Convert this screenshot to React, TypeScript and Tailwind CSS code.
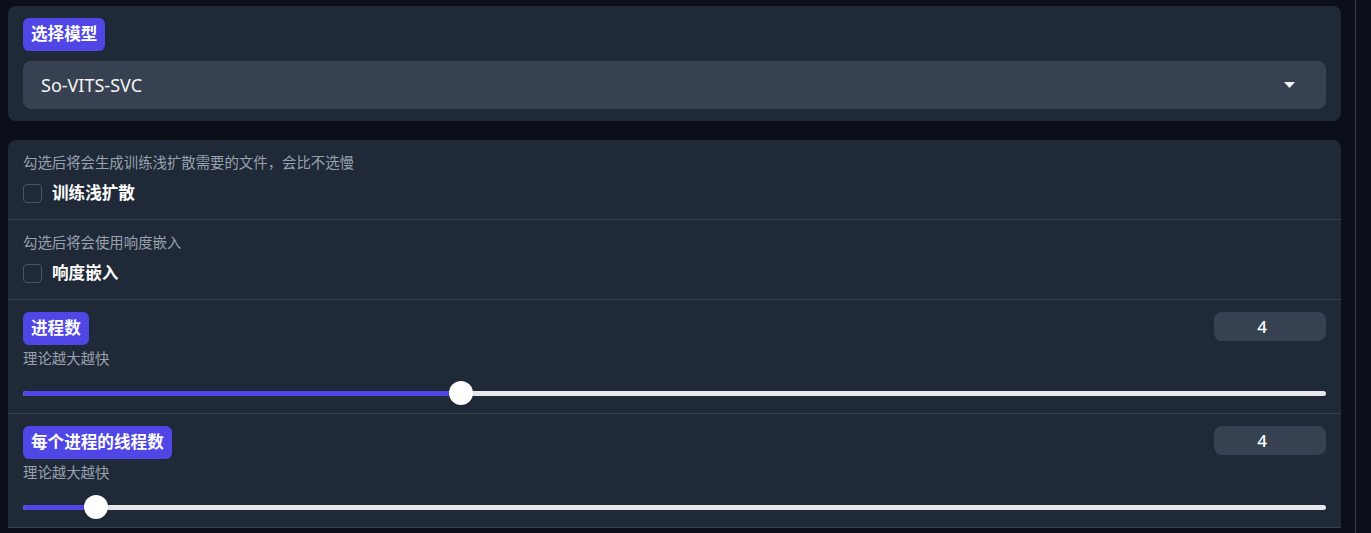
import React from 'react';

const font = { fontFamily: '"Noto Sans", "Noto Sans CJK SC", sans-serif' };

function Badge({ children }: { children: React.ReactNode }) {
  return (
    <span className="inline-flex h-[33px] items-center rounded-md bg-[#4f46e5] px-2 text-[16.6px] font-bold leading-none text-white">
      {children}
    </span>
  );
}

function CheckRow({ info, label }: { info: string; label: string }) {
  return (
    <div className="border-b border-[#374151] px-[15px] pt-[13px] pb-[15px]">
      <p className="text-[14.4px] leading-5 text-gray-400">{info}</p>
      <label className="mt-[9px] flex h-[22px] items-center gap-[10px]">
        <span className="h-[19px] w-[19px] rounded border border-[#4b5563] bg-[#1f2937]" />
        <span className="text-[16.6px] font-bold text-white">{label}</span>
      </label>
    </div>
  );
}

function SliderRow({ label, value, min, max }: { label: string; value: number; min: number; max: number }) {
  const pct = (value - min) / (max - min);
  const thumbCenter = `calc(12px + ${pct} * (100% - 24px))`;
  return (
    <div className="border-b border-[#374151] px-[15px] pt-3 pb-2">
      <div className="flex items-start justify-between">
        <div className="flex flex-col">
          <div>
            <Badge>{label}</Badge>
          </div>
          <p className="mt-1 text-[14.4px] leading-5 text-gray-400">理论越大越快</p>
        </div>
        <div className="flex h-[29px] w-[112px] items-center justify-center rounded-lg bg-[#374151] pr-4 text-[17px] font-medium text-white">
          {value}
        </div>
      </div>
      <div className="relative mt-3 h-6">
        <div className="absolute top-[10px] left-0 right-0 h-[5px] rounded-full bg-[#e5e7eb]" />
        <div className="absolute top-[10px] left-0 h-[5px] rounded-l-full bg-[#4f46e5]" style={{ width: thumbCenter }} />
        <div
          className="absolute top-0 h-6 w-6 -translate-x-1/2 rounded-full bg-white shadow"
          style={{ left: thumbCenter }}
        />
      </div>
    </div>
  );
}

export default function App() {
  return (
    <div className="flex min-h-[533px] bg-[#0b0f19]" style={font}>
      <div className="flex w-[1355px] flex-col gap-[19px] pt-1.5 pr-[14px] pl-2">
        <div className="rounded-lg bg-[#1f2937] px-[15px] pt-3 pb-3">
          <Badge>选择模型</Badge>
          <div className="mt-[10px] flex h-12 items-center justify-between rounded-lg bg-[#374151] pr-[31px] pl-[18px]">
            <span className="text-[18px] text-gray-100">So-VITS-SVC</span>
            <svg width="11" height="6" viewBox="0 0 11 6">
              <path d="M0 0H11L5.5 6Z" fill="#f3f4f6" />
            </svg>
          </div>
        </div>
        <div className="rounded-t-lg bg-[#1f2937]">
          <CheckRow info="勾选后将会生成训练浅扩散需要的文件，会比不选慢" label="训练浅扩散" />
          <CheckRow info="勾选后将会使用响度嵌入" label="响度嵌入" />
          <SliderRow label="进程数" value={4} min={1} max={10} />
          <SliderRow label="每个进程的线程数" value={4} min={1} max={64} />
        </div>
      </div>
      <div className="flex-1 border-l border-[#374151]" />
    </div>
  );
}
